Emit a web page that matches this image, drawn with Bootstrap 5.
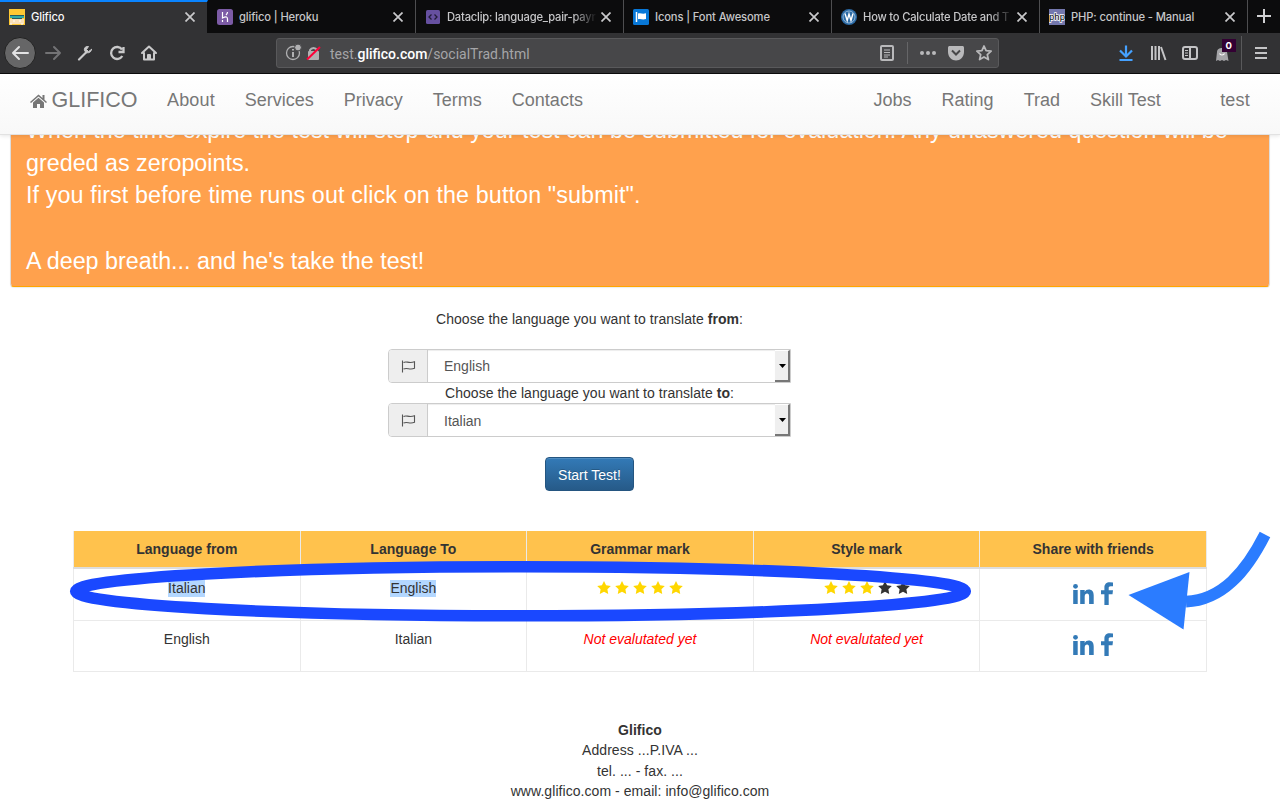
<!DOCTYPE html>
<html lang="en">
<head>
<meta charset="utf-8">
<title>Glifico</title>
<link href="https://cdn.jsdelivr.net/npm/bootstrap@5.3.0/dist/css/bootstrap.min.css" rel="stylesheet">
<style>
body{width:1280px;height:800px;overflow:hidden;background:#fff;color:#333;font:14px/20px "Liberation Sans",Arial,sans-serif}
svg{display:block;flex:none}
/* browser chrome */
.tabstrip{height:33px;background:#0c0c0d;font-family:Inter,Roboto,sans-serif;font-size:11.2px;letter-spacing:-.13px;font-weight:500;color:#c6c6c8}
.wtab{width:208px;height:33px;border-right:1px solid #4e4e50;padding:1px 12px 0 9px}
.wtab.current{background:#323234;border-top:2px solid #0a84ff;border-right:1px solid #0c0c0d;padding:0 12px 1px 9px;color:#f9f9fa}
.wtab .label{white-space:nowrap;overflow:hidden;line-height:20px;margin-left:6px}
.wtab .fade-end{-webkit-mask-image:linear-gradient(90deg,#000 84%,transparent);letter-spacing:-.2px}
.toolbar{height:41px;background:#323234;border-bottom:1px solid #0c0c0d}
.backbtn{width:32px;height:32px;background:#666667;border:1px solid #222;border-radius:50%}
.urlbar{width:723px;height:30px;background:#474749;border:1px solid #59595b;border-radius:3px;font:14px/28px Roboto,sans-serif;color:#a5a5a8;margin-left:118px}
.urlbar .address{line-height:16px;padding-top:1px}
.urlbar b{color:#fff;font-weight:500}
/* site navbar */
.sitenav{height:61px;background:linear-gradient(#fff,#f8f8f8);border-bottom:1px solid #e2e2e2;box-shadow:0 1px 4px rgba(0,0,0,.1);z-index:3;font-size:18px;color:#777;padding:0 15px}
.sitenav .item{padding:16px 15px 0;line-height:20px}
.sitenav .item.about{letter-spacing:.15px}
.sitenav .item.user{margin-left:24px;padding-left:20.500px;letter-spacing:.2px}
.sitenav .logo{font-size:21.5px;padding:16px 0 0 15px;line-height:20px;width:137px}
.sitenav .brandname{margin-left:4.500px}
/* page */
.intro{margin:-37px 10px 0;background:#ffa14d;border:1px solid #ddd;border-bottom-color:#ffa500;border-radius:4px;box-shadow:0 1px 1px rgba(0,0,0,.08);padding:15px 15px 0;height:189px;color:#fff;font-size:23.3px;line-height:32.7px;white-space:nowrap}
.intro .spaced{letter-spacing:.12px}
.pick{width:403px;margin:22px 0 0 388px}
.pick .ask{letter-spacing:.04px}
.ask-first{margin-bottom:20px}
.field{height:34px;border:1px solid #ccc;border-radius:4px 0 0 4px;color:#555}
.field .addon{width:39px;background:#eee;border-right:1px solid #ccc;border-radius:3px 0 0 3px}
.field .value{padding-left:16px;box-shadow:inset 0 1px 1px rgba(0,0,0,.075);line-height:33px}
.field .value.target{line-height:34px}
.field .drop{width:15px;background:#efefef;border-right:2px solid #777;border-bottom:2px solid #777;border-top:1px solid #fff;padding-left:1px}
.start{width:89px;height:34px;margin:20px auto 0;background:linear-gradient(#337ab7,#265a88);border:1px solid #245580;border-radius:4px;color:#fff;font-size:14px;line-height:20px;padding:2px 0 0;box-shadow:inset 0 1px 0 rgba(255,255,255,.15);text-shadow:0 -1px 0 rgba(0,0,0,.2)}
.marks{width:1134px;margin:40px 0 0 73px;table-layout:fixed;border-collapse:collapse;text-align:center}
.marks th,.marks td{border:1px solid #eaeaea;vertical-align:top;padding:8px 0 0}
.marks th{background:#ffc24d;height:37px;border-top:0;border-bottom:2px solid #ddd}
.marks td{height:51px}
.marks .latest td{height:52px;padding-top:9px}
.marks td.share{padding-top:12px}
.marks .latest td.share{padding-top:13px}
.picked{background:#b3d7ff;padding:0 0 1px}
.pending{color:#f00;font-style:italic}
.stars{gap:4px;padding-top:3px}
.overlay{left:0;top:0;z-index:5;pointer-events:none}
.foot{margin-top:48px;line-height:20.5px;letter-spacing:.06px}
</style>
</head>
<body>
<svg width="0" height="0" class="position-absolute">
<defs>
<symbol id="x" viewBox="0 0 10 10"><path d="M.5 .5l9 9M9.500 .5l-9 9" stroke="#c9c9cb" stroke-width="1.700"/></symbol>
<symbol id="star" viewBox="0 0 14 13"><path d="M7 0l2.100 4.300 4.700.7-3.400 3.300.8 4.700L7 10.800 2.800 13l.8-4.700L.2 5l4.700-.7z"/></symbol>
<symbol id="flag" viewBox="0 0 14 13"><path d="M1 .5v12M2 2.500c3-2 5 1.500 11-.8v6.600c-5 2.300-7-1.300-11 .8" fill="none" stroke="#555" stroke-width="1.100"/></symbol>
<symbol id="social" viewBox="0 0 42 24"><g fill="#337ab7"><circle cx="3.500" cy="4.300" r="2.400"/><path d="M1.200 8h4.500v14H1.200zM8.200 8h4.500v1.900c1-1.600 2.200-2.300 4-2.300 3.200 0 5 2.100 5 5.800V22h-4.600v-7.600c0-1.900-.6-2.900-2-2.900s-2.400 1-2.400 3V22H8.200zM41 .4v3.800h-2.200c-1.700 0-2.100.7-2.100 1.900v2.100H41l-.5 4h-3.800V23h-4.300V12.200H29v-4h3.400V5.500c0-3.400 2.100-5.300 5.300-5.300z"/></g></symbol>
</defs>
</svg>

<div class="tabstrip d-flex">
  <div class="wtab current d-flex align-items-center">
    <svg width="16" height="16"><path fill="#ffc933" d="M0 0h16v16H0z"/><path fill="#fae0b7" d="M1 10h14v5H1z"/><path fill="#245d62" d="M1 6h14v1H1zM3 9h10v1H3z"/><path fill="#32aaa5" d="M1 7h14v2H1z"/><path d="M4 12h2m4 0h2M1 15h2m9 0h2" stroke="#fff"/></svg>
    <span class="label flex-grow-1">Glifico</span><svg width="10" height="10"><use href="#x"/></svg>
  </div>
  <div class="wtab d-flex align-items-center">
    <svg width="16" height="16"><rect width="16" height="16" rx="2.500" fill="#7c5ba6"/><path d="M5.500 3v6c4-2 5-1 5 1v3M10.500 3c0 1-.5 2-1.500 3M5.500 11v2" stroke="#fff" stroke-width="1.200" fill="none"/></svg>
    <span class="label flex-grow-1">glifico | Heroku</span><svg width="10" height="10"><use href="#x"/></svg>
  </div>
  <div class="wtab d-flex align-items-center">
    <svg width="16" height="16"><rect x="1" y="1" width="14" height="14" rx="1.500" fill="#6650a0"/><path d="M6.500 5.500L4 8l2.500 2.500M9.500 5.500L12 8l-2.500 2.500" stroke="#211b38" stroke-width="1.300" fill="none"/></svg>
    <span class="label fade-end flex-grow-1">Dataclip: language_pair-payr</span><svg width="10" height="10" class="ms-1"><use href="#x"/></svg>
  </div>
  <div class="wtab d-flex align-items-center">
    <svg width="16" height="16"><rect width="16" height="16" rx="1.500" fill="#0878d8"/><path d="M3.500 3v10" stroke="#fff" stroke-width="1.500"/><path d="M5 4.500c3-1 4 1 8-.3V10c-4 1.300-5-.7-8 .3z" fill="#fff"/></svg>
    <span class="label flex-grow-1">Icons | Font Awesome</span><svg width="10" height="10"><use href="#x"/></svg>
  </div>
  <div class="wtab d-flex align-items-center">
    <svg width="16" height="16"><circle cx="8" cy="8" r="8" fill="#2b6aa5"/><circle cx="8" cy="8" r="6" fill="none" stroke="#a9c6df" stroke-width=".8"/><path d="M4 4.500L6.200 11.500 8 5l2 6.500L12 4.500" stroke="#fff" stroke-width="1.400" fill="none"/></svg>
    <span class="label fade-end flex-grow-1">How to Calculate Date and T</span><svg width="10" height="10" class="ms-1"><use href="#x"/></svg>
  </div>
  <div class="wtab d-flex align-items-center">
    <svg width="16" height="16"><path fill="#7377ad" d="M0 0h16v16H0z"/><text x="0" y="11" font-family="Liberation Sans" font-size="9.500" letter-spacing="0" textLength="16" fill="#000" stroke="#fff" stroke-width="1.500" paint-order="stroke">php</text></svg>
    <span class="label flex-grow-1">PHP: continue - Manual</span><svg width="10" height="10"><use href="#x"/></svg>
  </div>
  <svg width="32" height="33"><path d="M16 9v14M9 16h14" stroke="#d0d0d2" stroke-width="2"/></svg>
</div>

<div class="toolbar d-flex align-items-center position-relative">
  <div class="backbtn ms-1 d-flex align-items-center justify-content-center"><svg width="18" height="16" fill="none" stroke="#e3e3e4" stroke-width="2" stroke-linecap="round" stroke-linejoin="round"><path d="M17 8H2M8 2L2 8l6 6"/></svg></div>
  <svg width="122" height="40" fill="none" stroke="#c9c9ca" stroke-width="2" stroke-linecap="round" stroke-linejoin="round">
    <g stroke="#737375"><path d="M10 20h14M18 14l6 6-6 6"/></g>
    <path d="M43 26.500l7-7" stroke-width="2.200"/><path d="M55.500 16.500l-3 2-2-2 2-3c-4-.5-5 3-3.500 5s6 2 6.500-2z" fill="#c9c9ca" stroke-width="1"/>
    <path d="M86 16.500a6 6 0 1 0 .3 6.500M87.500 14v5h-5" stroke-width="2.300" stroke-linecap="butt" stroke-linejoin="miter"/>
    <path d="M106 20l7-6.500 7 6.500M108 20v6.500h10V20M112 26v-4h2v4"/>
  </svg>
  <div class="urlbar d-flex align-items-center">
    <svg width="53" height="28" fill="none"><circle cx="16" cy="14" r="6.500" stroke="#b1b1b3" stroke-width="1.300"/><path d="M16 13v5M16 10v1.500" stroke="#b1b1b3" stroke-width="2"/><circle cx="21" cy="8.500" r="3.400" fill="#b1b1b3" stroke="#474749"/><path d="M33 13v-2a4 4 0 0 1 7 0v2" stroke="#b1b1b3" stroke-width="2"/><rect x="31" y="12" width="11" height="9" rx="1" fill="#b1b1b3"/><path d="M30 20.500L43 8" stroke="#ff0039" stroke-width="2"/></svg>
    <span class="address flex-grow-1">test.<b>glifico.com</b>/socialTrad.html</span>
    <svg width="121" height="28" fill="none" stroke="#b9b9bb"><rect x="4" y="7" width="12" height="14" rx="1" stroke-width="2"/><path d="M7 11h6M7 13.500h6M7 16h6M7 18h4"/><path d="M30.500 3v22" stroke="#666668"/><g fill="#b9b9bb" stroke="none"><circle cx="45" cy="14" r="2"/><circle cx="51" cy="14" r="2"/><circle cx="57" cy="14" r="2"/><path d="M71 9c0-1.500.5-2 2-2h12c1.500 0 2 .5 2 2v4c0 5-4 8.500-8 8.500S71 18 71 13z"/></g><path d="M75 11.500l4 4 4-4" stroke="#474749" stroke-width="2"/><path d="M107 7l2.100 4.700 5 .5-3.800 3.400 1.100 5L107 18l-4.400 2.600 1.100-5-3.800-3.400 5-.5z" stroke-width="1.800" stroke-linejoin="round"/></svg>
  </div>
  <svg width="281" height="40" fill="none" stroke="#c4c4c6" stroke-width="2">
    <path d="M127 12.500v10M121 17.500l6 6 6-6M120.500 27h13" stroke="#45a1ff" stroke-width="2.200"/>
    <path d="M153 13v14M156.500 13v14M160 13v14M162 14l4.500 13"/>
    <rect x="184" y="14" width="14" height="12" rx="2"/><path d="M191 14v12"/><path d="M186 17.500h3m-3 2.500h3m-3 2.500h3" stroke-width="1"/>
    <path d="M217 28l1-9c0-5.500 10-5.500 10 0l1.500 9-2.500-1-2 1-2-1-2 1-2-1z" fill="#a5a5a8" stroke="none"/><path d="M220.500 20.500c1 2 4 2 5 0" stroke="#fff" stroke-width="1.200"/>
    <path d="M223 6h14v13h-14z" fill="#330033" stroke="none"/>
    <text x="226.500" y="16" font-family="Inter" font-weight="700" font-size="9.500" fill="#fff" stroke="none">0</text>
    <path d="M242.500 3v34" stroke="#59595b" stroke-width="1"/>
    <path d="M256 15h12M256 20h12M256 25h12"/>
  </svg>
</div>

<nav class="sitenav d-flex position-relative">
  <div class="logo d-flex"><svg width="17" height="14" class="mt-1" viewBox="0 0 17 14"><path d="M8.500 .5L0 8l1 1 7.500-6.500L16 9l1-1-2.500-2.200V1h-2v3z" fill="#777"/><path d="M3 8.500l5.500-4.700L14 8.500V14h-4v-4H7v4H3z" fill="#777"/></svg><span class="brandname">GLIFICO</span></div>
  <div class="item about">About</div><div class="item">Services</div><div class="item">Privacy</div><div class="item">Terms</div><div class="item">Contacts</div>
  <div class="item ms-auto">Jobs</div><div class="item">Rating</div><div class="item">Trad</div><div class="item">Skill Test</div><div class="item user">test</div>
</nav>

<main>
  <div class="intro">When the time expire the test will stop and your test can be submitted for evaluation. Any unaswered question will be<br>greded as zeropoints.<br><span class="spaced">If you first before time runs out click on the button "submit".</span><br><br>A deep breath... and he's take the test!</div>
  <div class="pick text-center">
    <div class="ask ask-first">Choose the language you want to translate <b>from</b>:</div>
    <div class="field d-flex text-start"><div class="addon d-flex align-items-center justify-content-center"><svg width="15" height="13"><use href="#flag"/></svg></div><div class="value flex-grow-1">English</div><div class="drop d-flex align-items-center justify-content-center"><svg width="7" height="4"><path d="M0 0h7L3.500 4z"/></svg></div></div>
    <div class="ask">Choose the language you want to translate <b>to</b>:</div>
    <div class="field d-flex text-start"><div class="addon d-flex align-items-center justify-content-center"><svg width="15" height="13"><use href="#flag"/></svg></div><div class="value target flex-grow-1">Italian</div><div class="drop d-flex align-items-center justify-content-center"><svg width="7" height="4"><path d="M0 0h7L3.500 4z"/></svg></div></div>
    <button class="start d-block">Start Test!</button>
  </div>
  <table class="marks">
    <thead><tr><th>Language from</th><th>Language To</th><th>Grammar mark</th><th>Style mark</th><th>Share with friends</th></tr></thead>
    <tbody>
      <tr class="latest"><td><span class="picked">Italian</span></td><td><span class="picked">English</span></td>
        <td><div class="stars d-flex justify-content-center"><svg width="14" height="13" fill="gold"><use href="#star"/></svg><svg width="14" height="13" fill="gold"><use href="#star"/></svg><svg width="14" height="13" fill="gold"><use href="#star"/></svg><svg width="14" height="13" fill="gold"><use href="#star"/></svg><svg width="14" height="13" fill="gold"><use href="#star"/></svg></div></td>
        <td><div class="stars d-flex justify-content-center"><svg width="14" height="13" fill="gold"><use href="#star"/></svg><svg width="14" height="13" fill="gold"><use href="#star"/></svg><svg width="14" height="13" fill="gold"><use href="#star"/></svg><svg width="14" height="13" fill="#333"><use href="#star"/></svg><svg width="14" height="13" fill="#333"><use href="#star"/></svg></div></td>
        <td class="share"><svg width="42" height="24" class="mx-auto"><use href="#social"/></svg></td></tr>
      <tr><td>English</td><td>Italian</td><td class="pending">Not evalutated yet</td><td class="pending">Not evalutated yet</td>
        <td class="share"><svg width="42" height="24" class="mx-auto"><use href="#social"/></svg></td></tr>
    </tbody>
  </table>
  <footer class="foot text-center"><b>Glifico</b><br>Address ...P.IVA ...<br>tel. ... - fax. ...<br>www.glifico.com - email: info@glifico.com</footer>
</main>

<!-- hand-drawn annotations over the page -->
<svg class="overlay position-absolute" width="1280" height="800" fill="none">
  <ellipse cx="520.500" cy="591.300" rx="444.800" ry="24.500" stroke="#1a48ff" stroke-width="11.600"/>
  <path d="M1186 601.700C1222 600 1246 572 1265 534.500" stroke="#2b7cff" stroke-width="11.800"/>
  <path d="M1128.500 595l61-23-6 57.500z" fill="#2b7cff"/>
</svg>
<script src="https://cdn.jsdelivr.net/npm/bootstrap@5.3.0/dist/js/bootstrap.bundle.min.js"></script>
</body>
</html>
